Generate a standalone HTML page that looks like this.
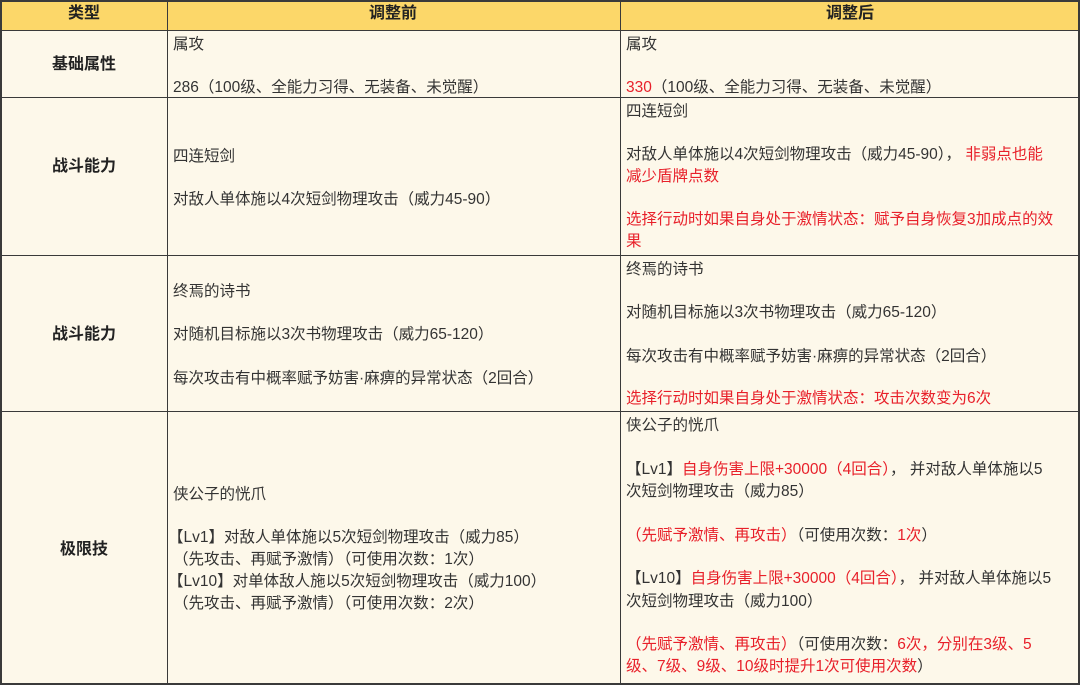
<!DOCTYPE html>
<html><head><meta charset="utf-8"><style>
body{margin:0;width:1080px;height:685px;overflow:hidden;background:#fdf8ea;font-family:"Liberation Sans","Noto Sans CJK SC",sans-serif;font-size:15.5px;color:#333;position:relative}
.h{position:absolute;left:0;top:0;width:1080px;height:30px;background:#fcd769}
.l{position:absolute;background:#3a3a3a}
.t{position:absolute;line-height:22px;white-space:nowrap;margin-top:2px}
.b{font-weight:bold;color:#222;font-size:16px;transform:translateX(-50%)}
.r{color:#e8202a}
</style></head><body>
<div class="h"></div>
<div class="l" style="left:0;top:0;width:1080px;height:2px"></div>
<div class="l" style="left:0;top:30px;width:1080px;height:1px"></div>
<div class="l" style="left:0;top:97px;width:1080px;height:1px"></div>
<div class="l" style="left:0;top:255px;width:1080px;height:1px"></div>
<div class="l" style="left:0;top:411px;width:1080px;height:1px"></div>
<div class="l" style="left:0;top:683px;width:1080px;height:2px"></div>
<div class="l" style="left:0;top:0;width:2px;height:685px"></div>
<div class="l" style="left:167px;top:0;width:1px;height:685px"></div>
<div class="l" style="left:620px;top:0;width:1px;height:685px"></div>
<div class="l" style="left:1078px;top:0;width:2px;height:685px"></div>

<div class="t b" style="left:84px;top:1px">类型</div>
<div class="t b" style="left:393px;top:1px">调整前</div>
<div class="t b" style="left:850px;top:1px">调整后</div>
<div class="t b" style="left:84px;top:52px">基础属性</div>
<div class="t b" style="left:84px;top:154px">战斗能力</div>
<div class="t b" style="left:84px;top:322px">战斗能力</div>
<div class="t b" style="left:84px;top:537px">极限技</div>

<div class="t" style="left:173px;top:32px">属攻</div>
<div class="t" style="left:173px;top:75px">286（100级、全能力习得、无装备、未觉醒）</div>
<div class="t" style="left:626px;top:32px">属攻</div>
<div class="t" style="left:626px;top:75px"><span class="r">330</span>（100级、全能力习得、无装备、未觉醒）</div>

<div class="t" style="left:173px;top:144px">四连短剑</div>
<div class="t" style="left:173px;top:187px">对敌人单体施以4次短剑物理攻击（威力45-90）</div>
<div class="t" style="left:626px;top:99px">四连短剑</div>
<div class="t" style="left:626px;top:142px">对敌人单体施以4次短剑物理攻击（威力45-90）， <span class="r">非弱点也能</span></div>
<div class="t r" style="left:626px;top:164px">减少盾牌点数</div>
<div class="t r" style="left:626px;top:207px">选择行动时如果自身处于激情状态：赋予自身恢复3加成点的效</div>
<div class="t r" style="left:626px;top:229px">果</div>

<div class="t" style="left:173px;top:279px">终焉的诗书</div>
<div class="t" style="left:173px;top:322px">对随机目标施以3次书物理攻击（威力65-120）</div>
<div class="t" style="left:173px;top:366px">每次攻击有中概率赋予妨害·麻痹的异常状态（2回合）</div>
<div class="t" style="left:626px;top:257px">终焉的诗书</div>
<div class="t" style="left:626px;top:300px">对随机目标施以3次书物理攻击（威力65-120）</div>
<div class="t" style="left:626px;top:344px">每次攻击有中概率赋予妨害·麻痹的异常状态（2回合）</div>
<div class="t r" style="left:626px;top:386px">选择行动时如果自身处于激情状态：攻击次数变为6次</div>

<div class="t" style="left:173px;top:482px">侠公子的恍爪</div>
<div class="t" style="left:168px;top:525px">【Lv1】对敌人单体施以5次短剑物理攻击（威力85）</div>
<div class="t" style="left:173px;top:547px">（先攻击、再赋予激情）（可使用次数：1次）</div>
<div class="t" style="left:168px;top:569px">【Lv10】对单体敌人施以5次短剑物理攻击（威力100）</div>
<div class="t" style="left:173px;top:591px">（先攻击、再赋予激情）（可使用次数：2次）</div>

<div class="t" style="left:626px;top:413px">侠公子的恍爪</div>
<div class="t" style="left:626px;top:457px">【Lv1】<span class="r">自身伤害上限+30000（4回合）</span>， 并对敌人单体施以5</div>
<div class="t" style="left:626px;top:479px">次短剑物理攻击（威力85）</div>
<div class="t" style="left:626px;top:523px"><span class="r">（先赋予激情、再攻击）</span>（可使用次数：<span class="r">1次</span>）</div>
<div class="t" style="left:626px;top:566px">【Lv10】<span class="r">自身伤害上限+30000（4回合）</span>， 并对敌人单体施以5</div>
<div class="t" style="left:626px;top:589px">次短剑物理攻击（威力100）</div>
<div class="t" style="left:626px;top:632px"><span class="r">（先赋予激情、再攻击）</span>（可使用次数：<span class="r">6次，分别在3级、5</span></div>
<div class="t r" style="left:626px;top:654px">级、7级、9级、10级时提升1次可使用次数<span style="color:#333">）</span></div>
</body></html>
